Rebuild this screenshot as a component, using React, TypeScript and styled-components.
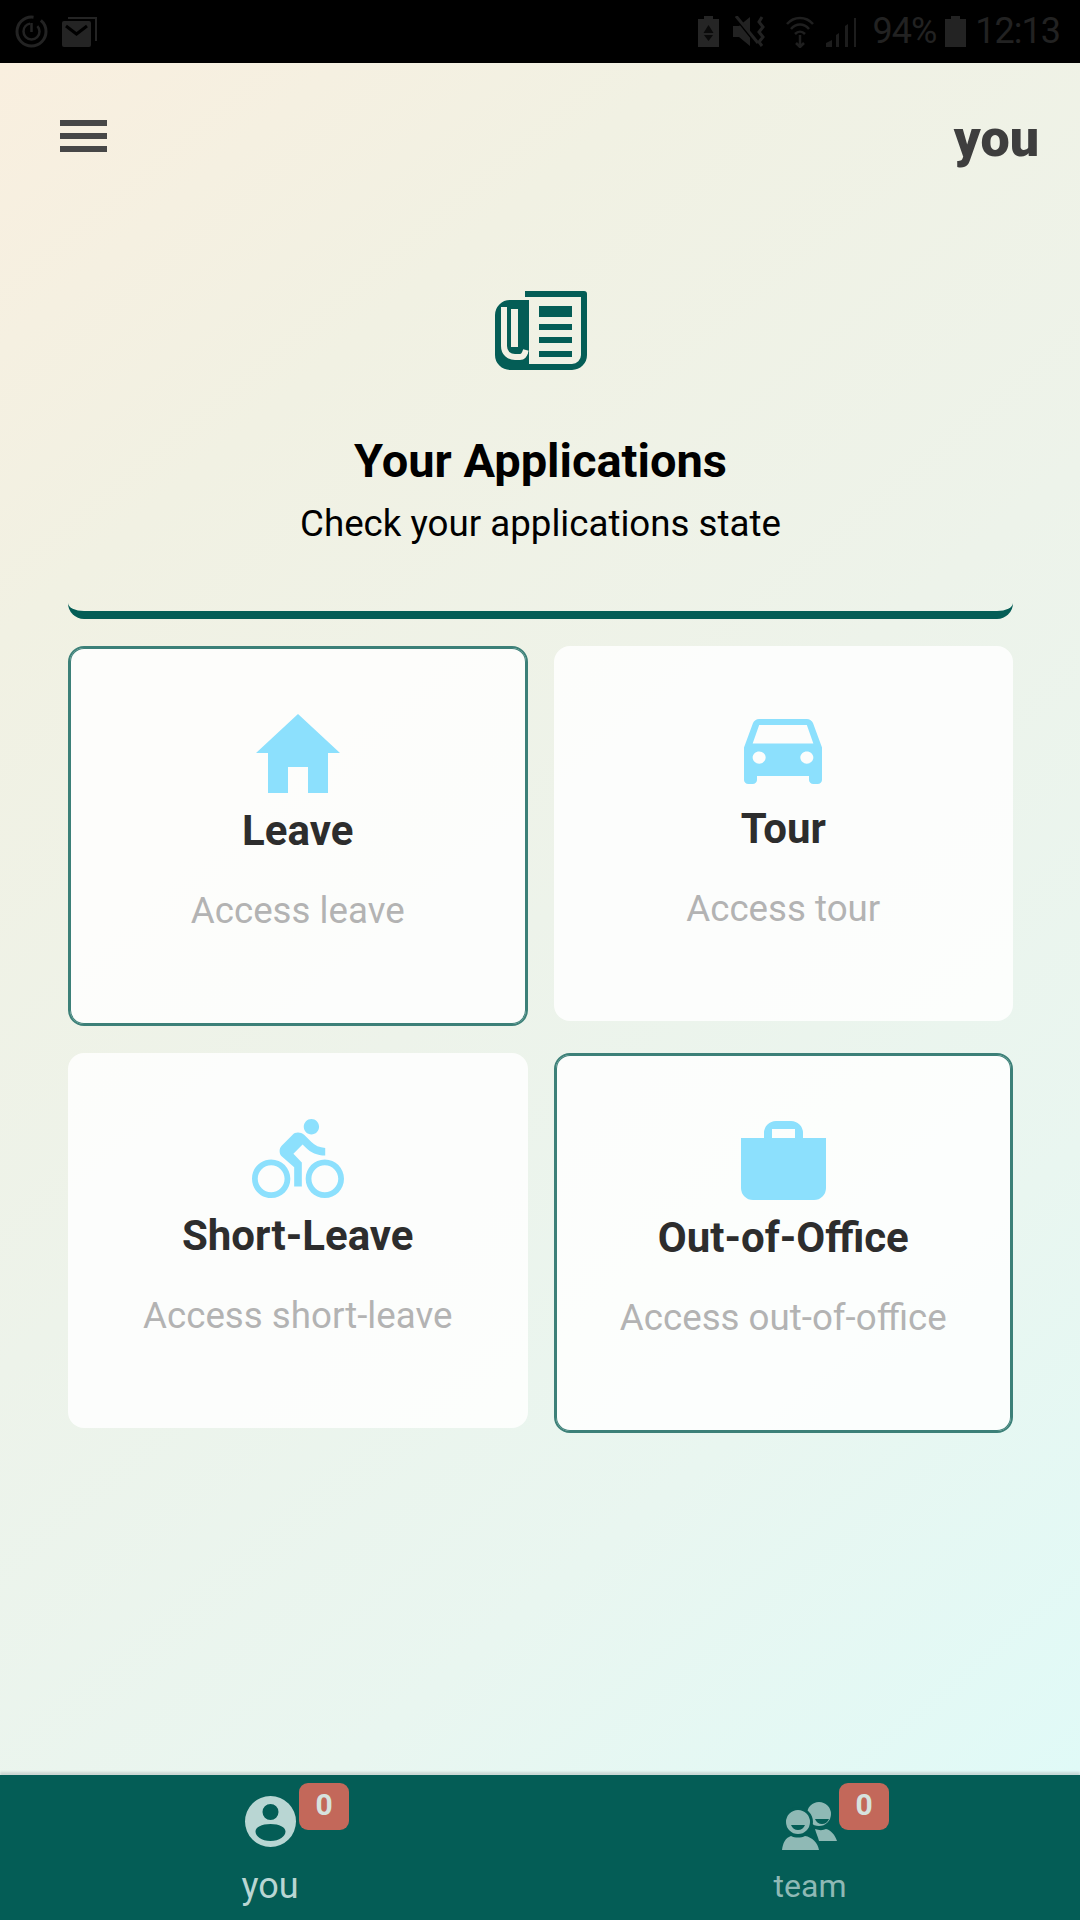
import React from "react";
import styled, { createGlobalStyle } from "styled-components";

const Global = createGlobalStyle`
  html, body { margin: 0; padding: 0; }
  body { font-family: Roboto, "Liberation Sans", sans-serif; }
  * { box-sizing: border-box; }
`;

const Screen = styled.div`
  width: 1080px;
  height: 1920px;
  display: flex;
  flex-direction: column;
  overflow: hidden;
`;

const StatusBar = styled.div`
  height: 63px;
  flex: none;
  background: #000;
  display: flex;
  align-items: center;
  justify-content: space-between;
  padding: 0 20px 0 15px;
  color: #232323;
`;

const StatusGroup = styled.div<{ $gap: number }>`
  display: flex;
  align-items: center;
  gap: ${(p) => p.$gap}px;
`;

const StatusGlyph = styled.svg<{ $before?: number; $after?: number }>`
  display: block;
  flex: none;
  margin: 0 ${(p) => p.$after ?? 0}px 0 ${(p) => p.$before ?? 0}px;
`;

const StatusText = styled.span`
  font-size: 36px;
  letter-spacing: -1px;
  line-height: 63px;
  font-weight: 400;
  color: #222;
`;

const Main = styled.main`
  flex: 1;
  min-height: 0;
  background: linear-gradient(140deg, #f9efdf 0%, #f1f1e3 22%, #edf3ea 50%, #e9f6f0 76%, #e0faf7 100%);
  padding: 0 67px 0 68px;
  display: flex;
  flex-direction: column;
`;

const Header = styled.header`
  height: 228px;
  margin: 0 -67px 0 -68px;
  padding: 57px 41px 0 60px;
  display: flex;
  justify-content: space-between;
  align-items: flex-start;
  flex: none;
`;

const MenuButton = styled.div`
  width: 47px;
  display: flex;
  flex-direction: column;
  gap: 7px;
`;

const MenuLine = styled.span`
  display: block;
  height: 6px;
  background: #474747;
`;

const WhoLabel = styled.div`
  font-size: 52px;
  line-height: 38px;
  font-weight: 900;
  color: #3e3e3e;
`;

const Hero = styled.section`
  height: 328px;
  border-bottom: 8px solid #045d56;
  border-radius: 0 0 16px 16px;
  display: flex;
  flex-direction: column;
  align-items: center;
  flex: none;
`;

const HeroIcon = styled.svg`
  display: block;
  flex: none;
`;

const HeroTitle = styled.h1`
  margin: 64px 0 0;
  font-size: 47px;
  line-height: 54px;
  font-weight: 700;
  color: #000;
`;

const HeroSub = styled.p`
  margin: 14px 0 0;
  font-size: 36.7px;
  line-height: 44px;
  font-weight: 400;
  color: #000;
`;

const Grid = styled.div`
  margin-top: 27px;
  display: grid;
  grid-template-columns: 1fr 1fr;
  column-gap: 26px;
  row-gap: 27px;
  align-items: start;
`;

const Card = styled.article<{ $active?: boolean }>`
  background: rgba(255, 255, 255, 0.83);
  border-radius: 16px;
  border: ${(p) => (p.$active ? "2px solid #3c8078" : "0 solid transparent")};
  box-shadow: ${(p) => (p.$active ? "inset 0 0 0 1px #3c8078" : "none")};
  height: ${(p) => (p.$active ? 380 : 375)}px;
  display: flex;
  flex-direction: column;
  align-items: center;
`;

const IconSlot = styled.div`
  height: 145px;
  width: 100%;
  display: flex;
  justify-content: center;
  align-items: flex-end;
  flex: none;
  color: #8ce0fd;
`;

const CardIcon = styled.svg<{ $lift?: number }>`
  display: block;
  fill: currentColor;
  margin-bottom: ${(p) => p.$lift ?? 0}px;
`;

const CardTitle = styled.h2`
  margin: 15px 0 0;
  font-size: 42px;
  line-height: 46px;
  font-weight: 700;
  color: #2d2d2d;
`;

const CardText = styled.p`
  margin: 35px 0 0;
  font-size: 36.7px;
  line-height: 44px;
  font-weight: 400;
  color: #b3b3b3;
`;

const BottomNav = styled.nav`
  height: 145px;
  flex: none;
  background: #045d56;
  box-shadow: 0 -3px 2px rgba(170, 180, 180, 0.45);
  display: grid;
  grid-template-columns: 1fr 1fr;
  position: relative;
`;

const Tab = styled.div<{ $dim?: boolean }>`
  position: relative;
  display: flex;
  flex-direction: column;
  align-items: center;
  color: ${(p) => (p.$dim ? "#8fb9b5" : "#b9d6d3")};
`;

const TabIconWrap = styled.div`
  height: 72px;
  display: flex;
  align-items: flex-end;
  justify-content: center;
`;

const TabLabel = styled.span<{ $size: number }>`
  font-family: Roboto, "Liberation Sans", Arial, sans-serif;
  font-size: ${(p) => p.$size}px;
  line-height: 40px;
  margin-top: 19px;
`;

const Badge = styled.span`
  position: absolute;
  top: 8px;
  left: calc(50% + 29px);
  width: 50px;
  height: 47px;
  border-radius: 9px;
  background: #c3685a;
  color: #d6e2de;
  font-size: 30px;
  font-weight: 700;
  line-height: 43px;
  text-align: center;
`;

const NewspaperIcon = () => (
  <HeroIcon width="92" height="79" viewBox="0 0 92 79">
    <path
      d="M30 3H89V64a12 12 0 0 1-12 12H30"
      fill="none"
      stroke="#045d56"
      strokeWidth="6"
      strokeLinejoin="round"
    />
    <path d="M34 0V9H15A15 15 0 0 0 0 24V64A15 15 0 0 0 15 79H34V0H28z" fill="#045d56" />
    <path d="M9 16V55C9 62 14 66 20 66H25C28 66 30 63 31 59" fill="none" stroke="#f1f0e4" strokeWidth="6" />
    <rect x="16" y="18" width="7" height="38" fill="#f1f0e4" />
    <path d="M34 58C33 66 30 70 26 73H34z" fill="#045d56" />
    <g fill="#045d56">
      <rect x="44" y="15" width="33" height="11" />
      <rect x="44" y="33" width="33" height="6" />
      <rect x="44" y="46" width="33" height="6" />
      <rect x="44" y="60" width="33" height="6" />
    </g>
  </HeroIcon>
);

const HomeIcon = () => (
  <CardIcon width="84" height="79" viewBox="0 0 84 79">
    <path d="M42 0L84 39H72V79H52V53H32V79H12V39H0z" />
  </CardIcon>
);

const CarIcon = () => (
  <CardIcon $lift={7} width="78" height="65" viewBox="3 5 18 16" preserveAspectRatio="none">
    <path d="M18.92 6.01C18.72 5.42 18.16 5 17.5 5h-11c-.66 0-1.21.42-1.42 1.01L3 12v8c0 .55.45 1 1 1h1c.55 0 1-.45 1-1v-1h12v1c0 .55.45 1 1 1h1c.55 0 1-.45 1-1v-8l-2.08-5.99zM6.5 16c-.83 0-1.5-.67-1.5-1.5S5.67 13 6.5 13s1.5.67 1.5 1.5S7.33 16 6.5 16zm11 0c-.83 0-1.5-.67-1.5-1.5s.67-1.5 1.5-1.5 1.5.67 1.5 1.5-.67 1.5-1.5 1.500zM5 11l1.5-4.5h11L19 11H5z" />
  </CardIcon>
);

const BikeIcon = () => (
  <CardIcon width="92" height="79" viewBox="0 1.5 24 20.5" preserveAspectRatio="none">
    <path d="M15.5 5.5c1.1 0 2-.9 2-2s-.9-2-2-2-2 .9-2 2 .9 2 2 2zM5 12c-2.8 0-5 2.2-5 5s2.2 5 5 5 5-2.2 5-5-2.2-5-5-5zm0 8.5c-1.9 0-3.5-1.6-3.5-3.5s1.6-3.5 3.5-3.5 3.5 1.6 3.5 3.5-1.6 3.5-3.5 3.5zm5.8-10l2.4-2.4.8.8c1.3 1.3 3 2.1 5.1 2.1V9c-1.5 0-2.7-.6-3.6-1.5l-1.9-1.9c-.5-.4-1-.6-1.6-.6s-1.1.2-1.4.6L7.8 8.4c-.4.4-.6.9-.6 1.4 0 .6.2 1.1.6 1.4L11 14v5h2v-6.2l-2.2-2.3zM19 12c-2.8 0-5 2.2-5 5s2.2 5 5 5 5-2.2 5-5-2.2-5-5-5zm0 8.5c-1.9 0-3.5-1.6-3.5-3.5s1.6-3.5 3.5-3.5 3.5 1.6 3.5 3.5-1.6 3.5-3.5 3.5z" />
  </CardIcon>
);

const CaseIcon = () => (
  <CardIcon width="85" height="79" viewBox="0 0 85 79">
    <path
      fillRule="evenodd"
      d="M23 17V12A12 12 0 0 1 35 0H50A12 12 0 0 1 62 12V17H85V67A12 12 0 0 1 73 79H12A12 12 0 0 1 0 67V17zM31 17H54V8H31z"
    />
  </CardIcon>
);

const UserIcon = () => (
  <svg width="51" height="51" viewBox="0 0 51 51">
    <path
      fill="currentColor"
      fillRule="evenodd"
      d="M25.5 0a25.5 25.5 0 1 0 0 51a25.5 25.5 0 1 0 0-51zM25.5 8a8 8 0 1 1 0 16a8 8 0 1 1 0-16zM25.5 28c9 0 15 3.4 15 7.5c0 4.5-6 9.5-15 9.5s-15-5-15-9.500c0-4.100 6-7.500 15-7.500z"
    />
  </svg>
);

const TeamSvg = styled.svg`
  display: block;
  margin-bottom: -3px;
`;

const TeamIcon = () => (
  <TeamSvg width="56" height="48" viewBox="0 0 56 48">
    <g fill="currentColor">
      <path fillRule="evenodd" d="M37 0a12 12 0 1 0 0 24a12 12 0 1 0 0-24zM33 17h14c-1 3-4 5-7 5s-6-2-7-5z" />
      <path d="M33 27c4 1.500 8 1.500 11 0 5 1 9 6 11 12H37c-1-4-3-8-4-12z" />
    </g>
    <circle cx="16" cy="20" r="15" fill="#045d56" />
    <g fill="currentColor">
      <path fillRule="evenodd" d="M16 8a12 12 0 1 0 0 24a12 12 0 1 0 0-24zM9 23h14c-1 3-4 5-7 5s-6-2-7-5z" />
      <path d="M9 34c4 2 10 2 14 0 7 1 13 7 14 14H0c1-7 3-12 9-14z" />
    </g>
  </TeamSvg>
);

const StatusLeftIcons = () => (
  <StatusGroup $gap={14}>
    <StatusGlyph width="33" height="33" viewBox="0 0 33 33" fill="none" stroke="#232323">
      <circle cx="16.500" cy="16.500" r="14.500" strokeWidth="3" strokeDasharray="70 8" />
      <circle cx="16.500" cy="16.500" r="8" strokeWidth="2.500" strokeDasharray="36 8" />
      <path d="M16.500 8v9" strokeWidth="2.500" />
    </StatusGlyph>
    <StatusGlyph width="35" height="30" viewBox="0 0 35 30" fill="#242424">
      <path d="M6 0H35V24H33V2H6z" />
      <rect x="0" y="4" width="29" height="26" rx="2" />
      <path d="M4 9L14.500 17L25 9" fill="none" stroke="#000" strokeWidth="3" />
    </StatusGlyph>
  </StatusGroup>
);

const StatusRightIcons = () => (
  <StatusGroup $gap={9}>
    <StatusGlyph $after={5} width="21" height="31" viewBox="0 0 21 31" fill="#252525">
      <path d="M6 0h9v3h6v28H0V3h6z" />
      <path d="M10.500 9l5 8H5.500zM6 19h9l-4.500 6z" fill="#0a0a0a" />
    </StatusGlyph>
    <StatusGlyph $after={9} width="35" height="31" viewBox="0 0 35 31" fill="#222">
      <path d="M0 10h6L17 1v29L6 21H0z" />
      <path d="M3 2L24 28" stroke="#000" strokeWidth="3" />
      <path d="M3 0L25 27" stroke="#222" strokeWidth="3" />
      <path d="M29 1l-3 5 4 5-4 5 4 5-4 5 3 4" fill="none" stroke="#222" strokeWidth="3" />
    </StatusGlyph>
    <StatusGlyph width="28" height="32" viewBox="0 0 28 32" fill="none" stroke="#1f1f1f" strokeWidth="2.500">
      <path d="M1 8C8 0 20 0 27 8M5 13c5-6 13-6 18 0M9 18c3-3 7-3 10 0" />
      <path d="M14 19v12M10 27l4 4 4-4" />
    </StatusGlyph>
    <StatusGlyph $before={3} $after={8} width="30" height="30" viewBox="0 0 30 30" fill="#1d1d1d">
      <path d="M0 30v-4l6-3v7zM10 30V18l3-2v14zM19 30V9l3-2v23zM28 30V1h2v29z" />
    </StatusGlyph>
    <StatusText>94%</StatusText>
    <StatusGlyph width="21" height="31" viewBox="0 0 21 31" fill="#232323">
      <path d="M6 0h9v3h6v28H0V3h6z" />
    </StatusGlyph>
    <StatusText>12:13</StatusText>
  </StatusGroup>
);

const cards = [
  { title: "Leave", text: "Access leave", icon: <HomeIcon />, active: true },
  { title: "Tour", text: "Access tour", icon: <CarIcon /> },
  { title: "Short-Leave", text: "Access short-leave", icon: <BikeIcon /> },
  { title: "Out-of-Office", text: "Access out-of-office", icon: <CaseIcon />, active: true },
];

export default function App() {
  return (
    <Screen>
      <Global />
      <StatusBar>
        <StatusLeftIcons />
        <StatusRightIcons />
      </StatusBar>
      <Main>
        <Header>
          <MenuButton>
            <MenuLine />
            <MenuLine />
            <MenuLine />
          </MenuButton>
          <WhoLabel>you</WhoLabel>
        </Header>
        <Hero>
          <NewspaperIcon />
          <HeroTitle>Your Applications</HeroTitle>
          <HeroSub>Check your applications state</HeroSub>
        </Hero>
        <Grid>
          {cards.map((c) => (
            <Card key={c.title} $active={c.active}>
              <IconSlot>{c.icon}</IconSlot>
              <CardTitle>{c.title}</CardTitle>
              <CardText>{c.text}</CardText>
            </Card>
          ))}
        </Grid>
      </Main>
      <BottomNav>
        <Tab>
          <TabIconWrap>
            <UserIcon />
          </TabIconWrap>
          <TabLabel $size={36}>you</TabLabel>
          <Badge>0</Badge>
        </Tab>
        <Tab $dim>
          <TabIconWrap>
            <TeamIcon />
          </TabIconWrap>
          <TabLabel $size={32}>team</TabLabel>
          <Badge>0</Badge>
        </Tab>
      </BottomNav>
    </Screen>
  );
}
